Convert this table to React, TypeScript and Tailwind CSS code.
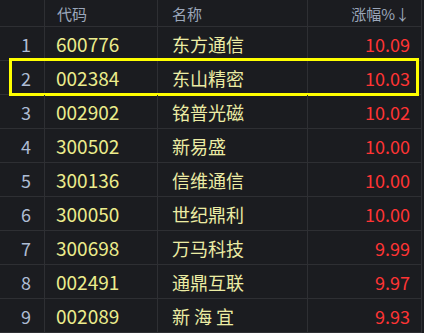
import React from "react";

const rows = [
  ["1", "600776", "东方通信", "10.09"],
  ["2", "002384", "东山精密", "10.03"],
  ["3", "002902", "铭普光磁", "10.02"],
  ["4", "300502", "新易盛", "10.00"],
  ["5", "300136", "信维通信", "10.00"],
  ["6", "300050", "世纪鼎利", "10.00"],
  ["7", "300698", "万马科技", "9.99"],
  ["8", "002491", "通鼎互联", "9.97"],
  ["9", "002089", "新 海 宜", "9.93"],
];

const font = { fontFamily: '"Noto Sans CJK SC", "Noto Sans", sans-serif' };

export default function App() {
  return (
    <div className="w-[424px] h-[333px] bg-[#1b1c20] overflow-hidden" style={font}>
      <div className="w-[422px] border-r border-[#2e2f33]">
        <div className="grid grid-cols-[45px_113px_150px_114px] h-[27px] border-b border-[#2e2f33] text-[15px] text-[#9ba7ba] leading-none">
          <div className="border-r border-[#2e2f33]" />
          <div className="border-r border-[#2e2f33] flex items-center pl-[12px]">代码</div>
          <div className="border-r border-[#2e2f33] flex items-center pl-[14px]">名称</div>
          <div className="flex items-center justify-end pr-[12px]">涨幅%↓</div>
        </div>
        {rows.map((r, i) => (
          <div
            key={i}
            className="relative grid grid-cols-[45px_113px_150px_114px] h-[34px] border-b border-[#2e2f33] text-[18px] leading-none"
          >
            <div className="border-r border-[#2e2f33] flex items-center justify-end pr-[13px] text-[#aebcd4]">{r[0]}</div>
            <div className="border-r border-[#2e2f33] flex items-center pl-[11px] text-[19px] text-[#ecec8c]">{r[1]}</div>
            <div className="border-r border-[#2e2f33] flex items-center pl-[14px] text-[#ececa4]">{r[2]}</div>
            <div className="flex items-center justify-end pr-[12px] text-[#ff3434]">{r[3]}</div>
            {i === 1 && (
              <div className="absolute left-[9px] right-[2px] top-[-3px] bottom-[-2px] border-[3px] border-[#ffff00] pointer-events-none" />
            )}
          </div>
        ))}
      </div>
      <div className="h-[2px] bg-[#1f4660]" />
    </div>
  );
}
